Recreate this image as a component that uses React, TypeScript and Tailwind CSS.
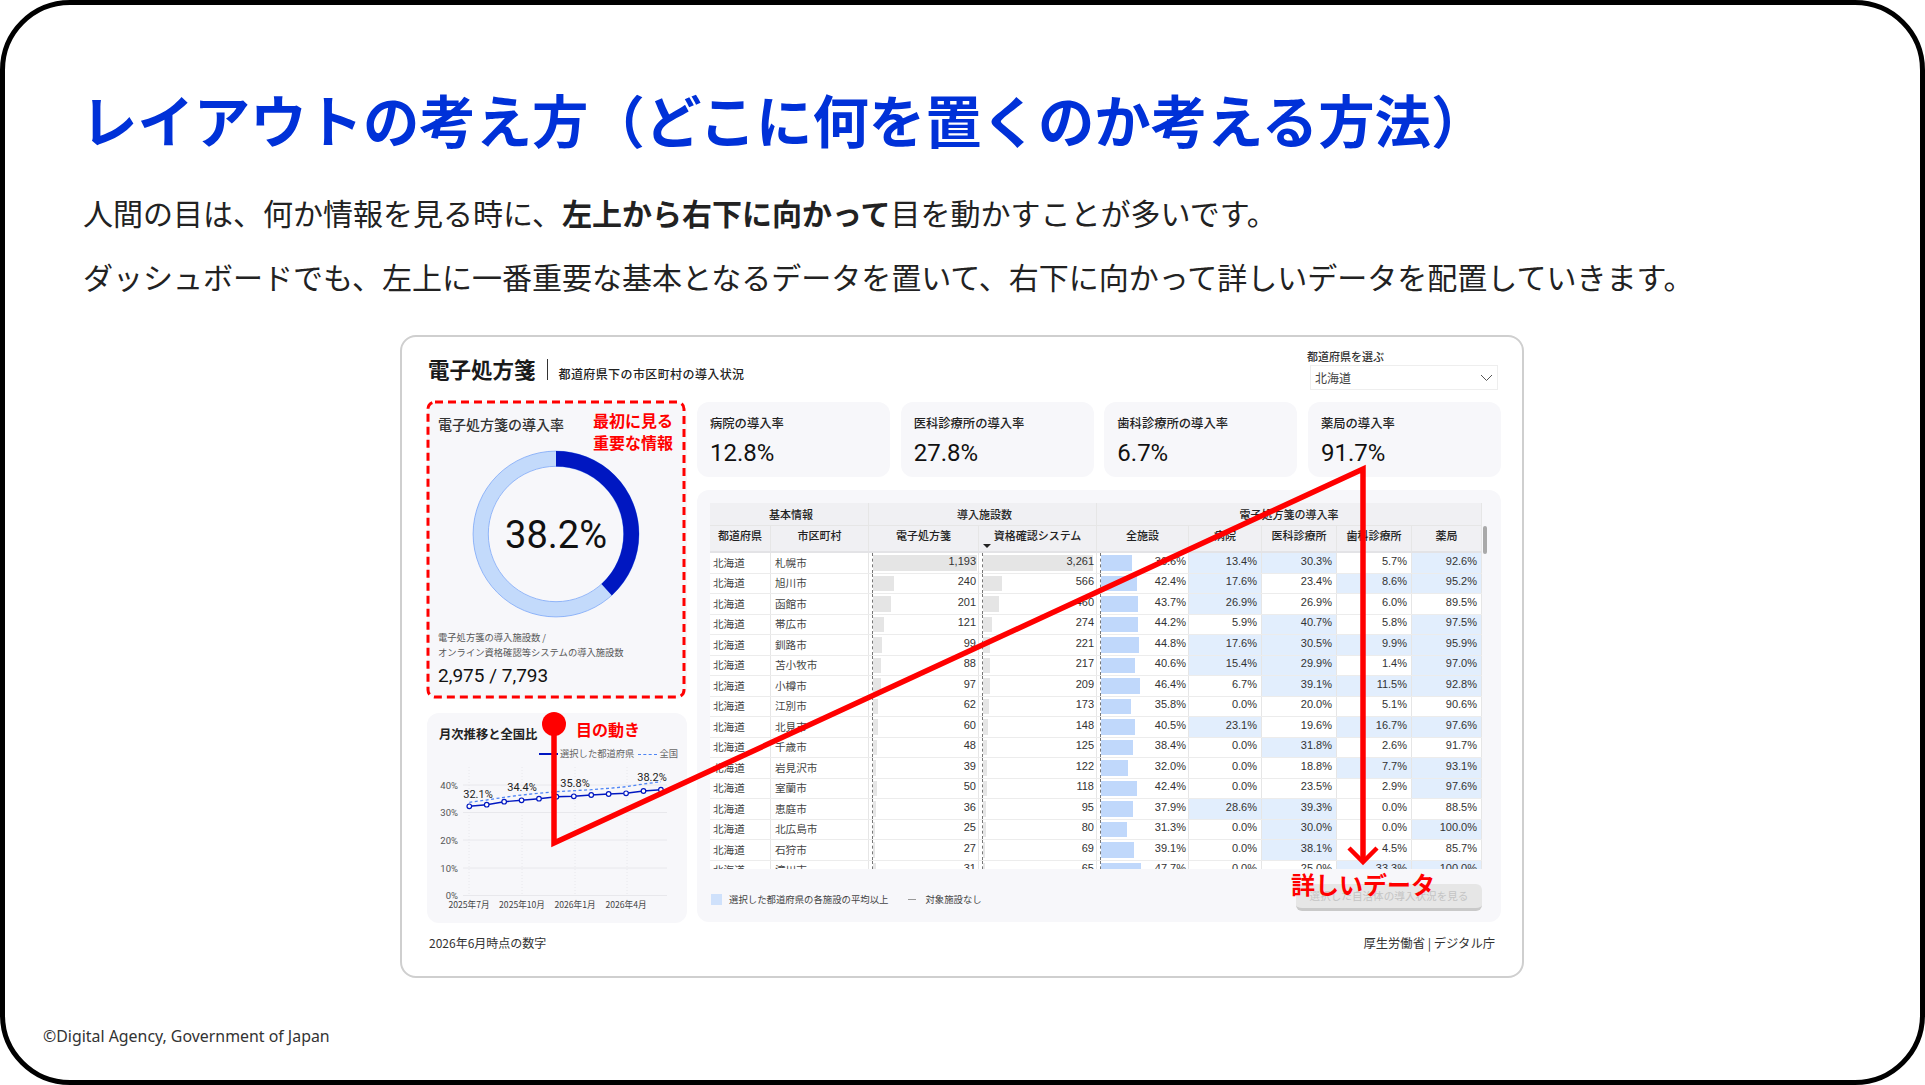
import React from "react";

const JP = "font-['Noto_Sans_CJK_JP','Noto_Sans',sans-serif]";
const NUM = "font-['Liberation_Sans','Noto_Sans_CJK_JP',sans-serif]";
const VAL = "font-['Roboto','Noto_Sans_CJK_JP',sans-serif]";

type Row = { c: string; a: number; b: number; all: number; h: [string, boolean]; m: [string, boolean]; d: [string, boolean]; p: [string, boolean] };

const r = (c: string, a: number, b: number, all: number, h: string, m: string, d: string, p: string): Row => ({
  c, a, b, all,
  h: [h.replace("*", ""), h.endsWith("*")],
  m: [m.replace("*", ""), m.endsWith("*")],
  d: [d.replace("*", ""), d.endsWith("*")],
  p: [p.replace("*", ""), p.endsWith("*")],
});

const rows: Row[] = [
  r("札幌市", 1193, 3261, 36.6, "13.4%*", "30.3%*", "5.7%", "92.6%*"),
  r("旭川市", 240, 566, 42.4, "17.6%*", "23.4%", "8.6%*", "95.2%*"),
  r("函館市", 201, 460, 43.7, "26.9%*", "26.9%", "6.0%", "89.5%"),
  r("帯広市", 121, 274, 44.2, "5.9%", "40.7%*", "5.8%", "97.5%*"),
  r("釧路市", 99, 221, 44.8, "17.6%*", "30.5%*", "9.9%*", "95.9%*"),
  r("苫小牧市", 88, 217, 40.6, "15.4%*", "29.9%*", "1.4%", "97.0%*"),
  r("小樽市", 97, 209, 46.4, "6.7%", "39.1%*", "11.5%*", "92.8%*"),
  r("江別市", 62, 173, 35.8, "0.0%", "20.0%", "5.1%", "90.6%"),
  r("北見市", 60, 148, 40.5, "23.1%*", "19.6%", "16.7%*", "97.6%*"),
  r("千歳市", 48, 125, 38.4, "0.0%", "31.8%*", "2.6%", "91.7%"),
  r("岩見沢市", 39, 122, 32.0, "0.0%", "18.8%", "7.7%*", "93.1%*"),
  r("室蘭市", 50, 118, 42.4, "0.0%", "23.5%", "2.9%", "97.6%*"),
  r("恵庭市", 36, 95, 37.9, "28.6%*", "39.3%*", "0.0%", "88.5%"),
  r("北広島市", 25, 80, 31.3, "0.0%", "30.0%*", "0.0%", "100.0%*"),
  r("石狩市", 27, 69, 39.1, "0.0%", "38.1%*", "4.5%", "85.7%"),
  r("滝川市", 31, 65, 47.7, "0.0%", "25.0%", "33.3%*", "100.0%*"),
];

const COLS = "grid-cols-[61px_98px_110px_118px_92px_73px_75px_75px_70px]";

function Num({ v }: { v: string }) {
  return <span className={`${NUM} relative text-[11px] leading-none text-[#333] pb-[3px]`}>{v}</span>;
}

function BarCell({ v, width, color }: { v: string; width: number; color: string }) {
  return (
    <div className="border-r border-[#e6e6e6] pl-[3px] h-full">
      <div className="relative h-full border-l border-dashed border-[#777] flex items-center justify-end pr-[2px]">
        <div className={`absolute left-0 top-[2px] bottom-[2px] ${color}`} style={{ width }} />
        <Num v={v} />
      </div>
    </div>
  );
}

function RateCell({ d }: { d: [string, boolean] }) {
  return (
    <div className={`flex items-center justify-end pr-[4px] border-r border-[#e6e6e6] h-full ${d[1] ? "bg-[#e2eefd]" : ""}`}>
      <Num v={d[0]} />
    </div>
  );
}

function Kpi({ label, value }: { label: string; value: string }) {
  return (
    <div className="w-[193px] h-[75px] rounded-[12px] bg-[#f7f7fa] pl-[13px] pt-[12px]">
      <div className="text-[12.3px] leading-[18px] font-medium text-[#222]">{label}</div>
      <div className={`${VAL} text-[24px] leading-[30px] mt-[6px] text-[#111]`}>{value}</div>
    </div>
  );
}

function Donut() {
  const rad = 75.3;
  const circ = 2 * Math.PI * rad;
  return (
    <svg viewBox="-85 -85 170 170" className="w-[170px] h-[170px]">
      <circle r={rad} fill="none" stroke="#c3dafb" strokeWidth={15} />
      <circle r={82.9} fill="none" stroke="#7aa6f7" strokeWidth={0.8} />
      <circle r={67.7} fill="none" stroke="#7aa6f7" strokeWidth={0.8} />
      <circle
        r={rad}
        fill="none"
        stroke="#0017c1"
        strokeWidth={15.5}
        strokeDasharray={`${circ * 0.382} ${circ}`}
        transform="rotate(-90)"
      />
      <text x={0} y={14} textAnchor="middle" fontSize={38} fill="#111" className={VAL}>38.2%</text>
    </svg>
  );
}

function LineChart() {
  const xs = Array.from({ length: 12 }, (_, i) => 469.3 + i * 17.42);
  const solid = [807.3, 805.7, 802.7, 801.3, 799.7, 797.7, 797.3, 796, 795, 794.3, 792, 790.7];
  const dash = [803.3, 801, 798.3, 796, 794.3, 792.7, 791.7, 790.7, 789.3, 787.7, 785, 782.7];
  const path = (ys: number[]) => xs.map((x, i) => `${x},${ys[i]}`).join(" ");
  const ticks: [string, number][] = [["40%", 786], ["30%", 813.5], ["20%", 841], ["10%", 869], ["0%", 896.5]];
  const xl: [string, number][] = [["2025年7月", 469], ["2025年10月", 522], ["2026年1月", 575], ["2026年4月", 626]];
  const pl: [string, number, number][] = [["32.1%", 478, 795], ["34.4%", 522, 788], ["35.8%", 575, 784], ["38.2%", 652, 778]];
  return (
    <svg viewBox="427 762 260 150" className="block w-[260px] h-[150px]">
      {[469, 522, 575, 627].map((x) => (
        <line key={x} x1={x} x2={x} y1={768} y2={896} stroke="#e8e8ec" strokeWidth={1} strokeDasharray="1 2" />
      ))}
      {ticks.map(([t, y]) => (
        <g key={t}>
          <line x1={463} x2={667} y1={y} y2={y} stroke="#e8e8ec" strokeWidth={1} />
          <text x={458} y={y + 3.5} textAnchor="end" fontSize={9.5} fill="#555" className={VAL}>{t}</text>
        </g>
      ))}
      {xl.map(([t, x]) => (
        <text key={t} x={x} y={909} textAnchor="middle" fontSize={8.6} fill="#444" className={JP}>{t}</text>
      ))}
      <polyline points={path(dash)} fill="none" stroke="#4d84f5" strokeWidth={1.3} strokeDasharray="3 2.5" />
      <polyline points={path(solid)} fill="none" stroke="#0017c1" strokeWidth={1.4} />
      {xs.map((x, i) => (
        <circle key={i} cx={x} cy={solid[i]} r={2.3} fill="#fff" stroke="#0017c1" strokeWidth={1.2} />
      ))}
      {pl.map(([t, x, y]) => (
        <text key={t} x={x} y={y + 4} textAnchor="middle" fontSize={11} fill="#222" className={VAL}>{t}</text>
      ))}
    </svg>
  );
}

function Chevron() {
  return (
    <svg width="13" height="8" viewBox="0 0 13 8" fill="none">
      <path d="M1 1l5.5 5.5L12 1" stroke="#555" strokeWidth="1" />
    </svg>
  );
}

function Table() {
  const th = "flex items-center justify-center border-r border-[#e6e6e6] text-[11px] font-medium text-[#222] h-full";
  return (
    <div className="w-[772px] h-[366px] overflow-hidden">
      <div className={`grid ${COLS} h-[22px] bg-[#f0f0f3]`}>
        <div className={`${th} col-span-2 pl-[4px]`}>基本情報</div>
        <div className={`${th} col-span-2 pl-[4px]`}>導入施設数</div>
        <div className={`${th} col-span-5`}>電子処方箋の導入率</div>
      </div>
      <div className={`grid ${COLS} h-[28px] bg-[#f0f0f3] border-t border-[#e6e6e6] border-b-2 border-b-[#e3e3e6]`}>
        {["都道府県", "市区町村", "電子処方箋", "資格確認システム", "全施設", "病院", "医科診療所", "歯科診療所", "薬局"].map((h, i) => (
          <div key={h} className={`${th} relative pb-[7px]`}>
            {h}
            {i === 3 && <span className="absolute left-[4px] bottom-[3px] w-0 h-0 border-x-[4px] border-x-transparent border-t-[4px] border-t-[#222]" />}
          </div>
        ))}
      </div>
      {rows.map((x) => (
        <div key={x.c} className={`grid ${COLS} h-[20.5px] bg-white border-b border-[#ececec]`}>
          <div className="flex items-center pl-[3px] border-r border-[#e6e6e6] text-[10.6px] text-[#444] h-full">北海道</div>
          <div className="flex items-center pl-[4px] border-r border-[#e6e6e6] text-[10.6px] text-[#444] h-full">{x.c}</div>
          <BarCell v={x.a.toLocaleString("en-US")} width={Math.max(x.a * 0.0875, 2)} color="bg-[#e5e5e5]" />
          <BarCell v={x.b.toLocaleString("en-US")} width={x.b * 0.0337} color="bg-[#e5e5e5]" />
          <BarCell v={`${x.all.toFixed(1)}%`} width={x.all * 0.84} color="bg-[#c0d8fb]" />
          <RateCell d={x.h} />
          <RateCell d={x.m} />
          <RateCell d={x.d} />
          <RateCell d={x.p} />
        </div>
      ))}
    </div>
  );
}

function Dashboard() {
  return (
    <div className="w-[1124px] h-[643px] ml-[395px] mt-[37.5px] rounded-[16px] border-2 border-[#cfcfcf] bg-white pl-[25px] pr-[21px]">
      <div className="flex h-[65px]">
        <div className="flex items-center mt-[9px] h-[50px] ml-[1px]">
          <span className="text-[21.5px] font-bold text-[#1a1a1a] leading-none pb-[5px]">電子処方箋</span>
          <span className="w-px h-[21px] bg-[#333] ml-[11px] mr-[11px] mb-[4px]" />
          <span className="text-[12px] font-medium text-[#222] tracking-[0.4px] mt-[5px]">都道府県下の市区町村の導入状況</span>
        </div>
        <div className="ml-auto mr-[3px] w-[191px] pt-[12px]">
          <div className="text-[11px] leading-[14px] font-medium text-[#333]">都道府県を選ぶ</div>
          <div className="ml-[3px] mt-[2px] h-[25px] border border-[#eeeeee] flex items-center justify-between pl-[4px] pr-[4px] text-[12px] text-[#444]">
            <span>北海道</span>
            <Chevron />
          </div>
        </div>
      </div>
      <div className="flex gap-[10px]">
        <div className="w-[260px] flex flex-col gap-[14px]">
          <div className="h-[297px] rounded-[12px] bg-[#f7f7fa] pl-[11px] pt-[12px]">
            <div className="text-[14px] leading-[20px] font-medium text-[#333]">電子処方箋の導入率</div>
            <div className="ml-[33px] mt-[15px]"><Donut /></div>
            <div className="text-[9.3px] leading-[15px] text-[#555] mt-[11px]">
              電子処方箋の導入施設数 /<br />オンライン資格確認等システムの導入施設数
            </div>
            <div className={`${VAL} text-[19px] leading-[26px] text-[#111] mt-[3px]`}>2,975 / 7,793</div>
          </div>
          <div className="h-[210px] rounded-[12px] bg-[#f7f7fa]">
            <div className="pl-[12px] pt-[12px] text-[12.3px] leading-[18px] font-bold text-[#222]">月次推移と全国比</div>
            <div className="flex items-center justify-end pr-[9px] mt-[3px] h-[16px] text-[9.3px] text-[#666]">
              <span className="w-[19px] h-[1.5px] bg-[#0017c1] mr-[2px]" />
              <span>選択した都道府県</span>
              <span className="w-[19px] border-t-[1.5px] border-dashed border-[#4d84f5] ml-[4px] mr-[2px]" />
              <span>全国</span>
            </div>
            <div className="-mt-[1px]"><LineChart /></div>
          </div>
        </div>
        <div className="w-[804px]">
          <div className="flex justify-between">
            <Kpi label="病院の導入率" value="12.8%" />
            <Kpi label="医科診療所の導入率" value="27.8%" />
            <Kpi label="歯科診療所の導入率" value="6.7%" />
            <Kpi label="薬局の導入率" value="91.7%" />
          </div>
          <div className="mt-[13px] h-[432px] rounded-[12px] bg-[#f7f7fa] pl-[13px] pt-[13px]">
            <div className="flex">
              <Table />
              <div className="w-[5px] ml-[1px] pt-[23px]"><div className="w-[4px] h-[28px] rounded-[2px] bg-[#a9a9a9]" /></div>
            </div>
            <div className="flex items-start mt-[15px] w-[772px]">
              <div className="flex items-center mt-[8px] text-[9.4px] text-[#444]">
                <span className="w-[11px] h-[11px] bg-[#cfe1fb] ml-[1px] mr-[7px]" />
                <span>選択した都道府県の各施設の平均以上</span>
                <span className="w-[8px] h-px bg-[#999] ml-[20px] mr-[9px]" />
                <span>対象施設なし</span>
              </div>
              <div className="ml-auto w-[186px] h-[27px] rounded-[6px] bg-[#e6e6e6] border-b-[3px] border-[#c9c9c9] flex items-center justify-center text-[10.6px] text-[#c4c4c4]">
                選択した自治体の導入状況を見る
              </div>
            </div>
          </div>
        </div>
      </div>
      <div className="flex justify-between mt-[11px] text-[12px] leading-[18px] text-[#333] pl-[2px] pr-[6px]">
        <span>2026年6月時点の数字</span>
        <span className="text-[12.3px]">厚生労働省 | デジタル庁</span>
      </div>
    </div>
  );
}

export default function App() {
  return (
    <div className={`relative w-[1925px] h-[1085px] overflow-hidden bg-white ${JP}`}>
      <div className="w-full h-full rounded-[70px] border-[5px] border-black pt-[76.5px] flex flex-col">
        <h1 className="ml-[76px] text-[56.4px] leading-[74px] font-bold text-[#0031d8] whitespace-nowrap">
          レイアウトの考え方（どこに何を置くのか考える方法）
        </h1>
        <p className="ml-[78px] mt-[34px] text-[30px] leading-[44px] text-[#222] whitespace-nowrap">
          人間の目は、何か情報を見る時に、<b className="font-bold">左上から右下に向かって</b>目を動かすことが多いです。
        </p>
        <p className="ml-[78px] mt-[20px] text-[30px] leading-[44px] text-[#222] whitespace-nowrap">
          ダッシュボードでも、左上に一番重要な基本となるデータを置いて、右下に向かって詳しいデータを配置していきます。
        </p>
        <Dashboard />
        <div className="ml-[38px] mt-[46px] text-[15.9px] leading-[24px] text-[#333] font-['Noto_Sans',sans-serif]">©Digital Agency, Government of Japan</div>
      </div>

      <svg viewBox="0 0 1925 1085" className="absolute left-0 top-0 w-[1925px] h-[1085px] pointer-events-none">
        <rect x={428} y={402} width={256} height={295} rx={7} fill="none" stroke="#ff0000" strokeWidth={3} strokeDasharray="8 5" />
        <circle cx={554} cy={724} r={12} fill="#ff0000" />
        <polyline points="554,724 554,843 1363,469 1363,861" fill="none" stroke="#ff0000" strokeWidth={5.5} strokeLinejoin="miter" />
        <polyline points="1349,848 1363,862 1377,848" fill="none" stroke="#ff0000" strokeWidth={4.5} />
      </svg>
      <div className="absolute left-[593px] top-[409px] text-[16px] leading-[22px] font-bold text-[#ff0000]">
        最初に見る<br />重要な情報
      </div>
      <div className="absolute left-[576px] top-[717px] text-[16px] leading-[24px] font-bold text-[#ff0000]">目の動き</div>
      <div className="absolute left-[1291px] top-[867px] text-[24px] leading-[34px] font-bold text-[#ff0000] whitespace-nowrap">詳しいデータ</div>
    </div>
  );
}
